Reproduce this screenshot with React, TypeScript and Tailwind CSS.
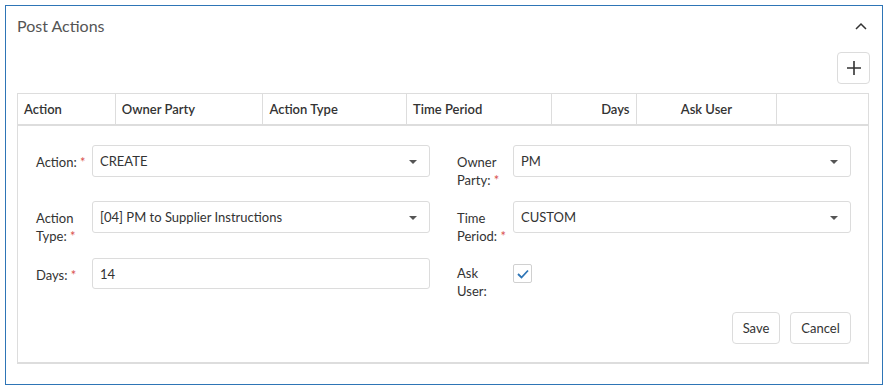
import React from "react";

const font = { fontFamily: '"Lato", "Segoe UI", "Noto Sans", sans-serif' };

function Caret() {
  return (
    <svg width="8" height="4" viewBox="0 0 8 4" className="shrink-0">
      <path d="M0 0 L8 0 L4 4 Z" fill="#555" />
    </svg>
  );
}

function Select({ value }: { value: string }) {
  return (
    <div className="flex h-[32px] w-[338px] items-center justify-between rounded-[3px] border border-[#dcdcdc] bg-white pl-[7px] pr-[12px] pt-[2px] text-[13px] text-[#333]">
      <span>{value}</span>
      <Caret />
    </div>
  );
}

function Label({ lines, pt = "pt-[8px]" }: { lines: string[]; pt?: string }) {
  return (
    <div className={`w-[56px] shrink-0 text-[13px] leading-[18px] text-[#333] ${pt}`}>
      {lines.map((l, i) => (
        <div key={i}>
          {l}
          {i === lines.length - 1 && <span className="text-[#d9534f]"> *</span>}
        </div>
      ))}
    </div>
  );
}

function PlainLabel({ lines, pt = "pt-[8px]" }: { lines: string[]; pt?: string }) {
  return (
    <div className={`w-[56px] shrink-0 text-[13px] leading-[18px] text-[#333] ${pt}`}>
      {lines.map((l, i) => (
        <div key={i}>{l}</div>
      ))}
    </div>
  );
}

export default function App() {
  const cols: { label: string; w: string; align: string }[] = [
    { label: "Action", w: "w-[98px]", align: "justify-start" },
    { label: "Owner Party", w: "w-[148px]", align: "justify-start" },
    { label: "Action Type", w: "w-[144px]", align: "justify-start" },
    { label: "Time Period", w: "w-[145px]", align: "justify-start" },
    { label: "Days", w: "w-[85px]", align: "justify-end" },
    { label: "Ask User", w: "w-[141px]", align: "justify-center" },
    { label: "", w: "w-[91px]", align: "justify-start" },
  ];
  return (
    <div className="bg-white pl-[5px] pt-[5px]" style={font}>
      <div className="box-border h-[380px] w-[878px] border border-[#2e75b6] pl-[11px] pr-[12px]">
        {/* Title row */}
        <div className="flex h-[40px] items-center justify-between">
          <span className="text-[16px] text-[#555]">Post Actions</span>
          <svg width="12" height="8" viewBox="0 0 12 8" className="mr-[3px]">
            <path d="M1 7 L6 2 L11 7" fill="none" stroke="#333" strokeWidth="1.5" />
          </svg>
        </div>
        {/* Plus row */}
        <div className="mt-[6px] flex justify-end">
          <div className="flex h-[32px] w-[33px] items-center justify-center rounded-[4px] border border-[#dcdcdc] bg-white">
            <svg width="14" height="14" viewBox="0 0 14 14">
              <path d="M7 0 V14 M0 7 H14" stroke="#333" strokeWidth="1.6" />
            </svg>
          </div>
        </div>
        {/* Table */}
        <div className="mt-[9px] w-[852px] border-x border-b-2 border-x-[#ddd] border-b-[#ddd]">
          <div className="flex h-[33px] border-t border-b-2 border-t-[#ddd] border-b-[#ddd]">
            {cols.map((c, i) => (
              <div
                key={i}
                className={`flex ${c.w} ${c.align} items-center px-[6px] pt-[1px] text-[13px] font-semibold text-[#333] ${
                  i < cols.length - 1 ? "border-r border-r-[#ddd]" : ""
                } box-border`}
              >
                {c.label}
              </div>
            ))}
          </div>
          {/* Form */}
          <div className="pl-[18px] pr-[17px] pt-[19px] pb-[18px]">
            <div className="flex h-[56px] items-start">
              <Label lines={["Action:"]} />
              <Select value="CREATE" />
              <div className="ml-[27px] flex items-start">
                <Label lines={["Owner", "Party:"]} />
                <Select value="PM" />
              </div>
            </div>
            <div className="flex h-[57px] items-start">
              <Label lines={["Action", "Type:"]} />
              <Select value="[04] PM to Supplier Instructions" />
              <div className="ml-[27px] flex items-start">
                <Label lines={["Time", "Period:"]} />
                <Select value="CUSTOM" />
              </div>
            </div>
            <div className="flex h-[54px] items-start">
              <Label lines={["Days:"]} />
              <div className="flex h-[31px] w-[338px] items-center rounded-[3px] border border-[#dcdcdc] bg-white pl-[7px] pt-[2px] text-[13px] text-[#333]">
                14
              </div>
              <div className="ml-[27px] flex items-start">
                <PlainLabel lines={["Ask", "User:"]} pt="pt-[6px]" />
                <div className="mt-[6px] flex h-[19px] w-[19px] items-center justify-center rounded-[2px] border border-[#d0d0d0] bg-white">
                  <svg width="12" height="10" viewBox="0 0 12 10">
                    <path d="M1 5 L4.5 8.5 L11 1.5" fill="none" stroke="#2e75b6" strokeWidth="1.8" />
                  </svg>
                </div>
              </div>
            </div>
            <div className="flex justify-end gap-[10px]">
              <div className="flex h-[32px] w-[48px] items-center justify-center rounded-[4px] border border-[#dcdcdc] bg-white pt-[1px] text-[13px] text-[#333]">
                Save
              </div>
              <div className="flex h-[32px] w-[61px] items-center justify-center rounded-[4px] border border-[#dcdcdc] bg-white pt-[1px] text-[13px] text-[#333]">
                Cancel
              </div>
            </div>
          </div>
        </div>
      </div>
    </div>
  );
}
